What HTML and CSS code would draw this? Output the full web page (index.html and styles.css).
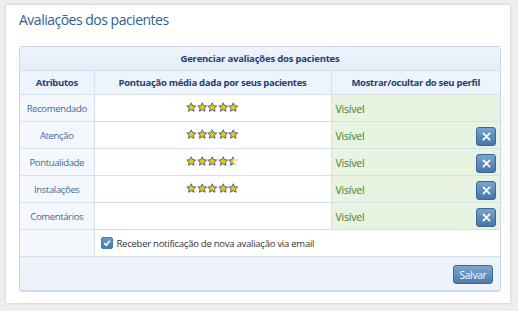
FILE: index.html
```html
<!DOCTYPE html>
<html>
<head>
<meta charset="utf-8">
<link rel="stylesheet" href="styles.css">
</head>
<body>
<svg class="defs" width="0" height="0">
  <defs>
    <polygon id="star" points="5,0 6.41,3.06 9.76,3.45 7.28,5.74 7.94,9.05 5,7.4 2.06,9.05 2.72,5.74 0.24,3.45 3.59,3.06"/>
    <clipPath id="half"><rect x="-1" y="-1" width="6.3" height="12"/></clipPath>
  </defs>
</svg>
<div class="card">
  <h1 class="title">Avaliações dos pacientes</h1>
  <div class="panel">
    <table class="grid">
      <colgroup><col class="c1"><col class="c2"><col class="c3"></colgroup>
      <thead>
        <tr><th colspan="3" class="caption">Gerenciar avaliações dos pacientes</th></tr>
        <tr class="heads"><th>Atributos</th><th>Pontuação média dada por seus pacientes</th><th>Mostrar/ocultar do seu perfil</th></tr>
      </thead>
      <tbody>
        <tr>
          <td class="attr">Recomendado</td>
          <td class="score"><span class="stars">
            <svg viewBox="-0.6 -0.6 11.2 11.2" class="st"><use href="#star"/></svg><svg viewBox="-0.6 -0.6 11.2 11.2" class="st"><use href="#star"/></svg><svg viewBox="-0.6 -0.6 11.2 11.2" class="st"><use href="#star"/></svg><svg viewBox="-0.6 -0.6 11.2 11.2" class="st"><use href="#star"/></svg><svg viewBox="-0.6 -0.6 11.2 11.2" class="st"><use href="#star"/></svg>
          </span></td>
          <td class="vis"><div class="visrow"><span>Visível</span></div></td>
        </tr>
        <tr>
          <td class="attr">Atenção</td>
          <td class="score"><span class="stars">
            <svg viewBox="-0.6 -0.6 11.2 11.2" class="st"><use href="#star"/></svg><svg viewBox="-0.6 -0.6 11.2 11.2" class="st"><use href="#star"/></svg><svg viewBox="-0.6 -0.6 11.2 11.2" class="st"><use href="#star"/></svg><svg viewBox="-0.6 -0.6 11.2 11.2" class="st"><use href="#star"/></svg><svg viewBox="-0.6 -0.6 11.2 11.2" class="st"><use href="#star"/></svg>
          </span></td>
          <td class="vis"><div class="visrow"><span>Visível</span><span class="xbtn"><svg viewBox="0 0 10 10"><path d="M2.2 2.2L7.8 7.8M7.8 2.2L2.2 7.8"/></svg></span></div></td>
        </tr>
        <tr>
          <td class="attr">Pontualidade</td>
          <td class="score"><span class="stars">
            <svg viewBox="-0.6 -0.6 11.2 11.2" class="st"><use href="#star"/></svg><svg viewBox="-0.6 -0.6 11.2 11.2" class="st"><use href="#star"/></svg><svg viewBox="-0.6 -0.6 11.2 11.2" class="st"><use href="#star"/></svg><svg viewBox="-0.6 -0.6 11.2 11.2" class="st"><use href="#star"/></svg><svg viewBox="-0.6 -0.6 11.2 11.2" class="st"><use href="#star" class="faded"/><use href="#star" clip-path="url(#half)"/></svg>
          </span></td>
          <td class="vis"><div class="visrow"><span>Visível</span><span class="xbtn"><svg viewBox="0 0 10 10"><path d="M2.2 2.2L7.8 7.8M7.8 2.2L2.2 7.8"/></svg></span></div></td>
        </tr>
        <tr>
          <td class="attr">Instalações</td>
          <td class="score"><span class="stars">
            <svg viewBox="-0.6 -0.6 11.2 11.2" class="st"><use href="#star"/></svg><svg viewBox="-0.6 -0.6 11.2 11.2" class="st"><use href="#star"/></svg><svg viewBox="-0.6 -0.6 11.2 11.2" class="st"><use href="#star"/></svg><svg viewBox="-0.6 -0.6 11.2 11.2" class="st"><use href="#star"/></svg><svg viewBox="-0.6 -0.6 11.2 11.2" class="st"><use href="#star"/></svg>
          </span></td>
          <td class="vis"><div class="visrow"><span>Visível</span><span class="xbtn"><svg viewBox="0 0 10 10"><path d="M2.2 2.2L7.8 7.8M7.8 2.2L2.2 7.8"/></svg></span></div></td>
        </tr>
        <tr>
          <td class="attr">Comentários</td>
          <td class="score"></td>
          <td class="vis"><div class="visrow"><span>Visível</span><span class="xbtn"><svg viewBox="0 0 10 10"><path d="M2.2 2.2L7.8 7.8M7.8 2.2L2.2 7.8"/></svg></span></div></td>
        </tr>
        <tr class="notify">
          <td class="attr"></td>
          <td colspan="2" class="notecell"><label class="check"><span class="box"><svg viewBox="0 0 10 10"><path d="M2.2 5.2L4.2 7.2L7.9 2.9"/></svg></span>Receber notificação de nova avaliação via email</label></td>
        </tr>
      </tbody>
    </table>
    <div class="footer"><span class="save">Salvar</span></div>
  </div>
</div>
</body>
</html>
```
FILE: styles.css
```css
html, body { margin: 0; padding: 0; }
body {
  background: #eeeeee;
  width: 518px;
  height: 311px;
  font-family: "Open Sans", "Noto Sans", sans-serif;
  padding: 5px 0 0 6px;
  box-sizing: border-box;
  overflow: hidden;
}
.defs { position: absolute; width: 0; height: 0; }
.card {
  width: 504px;
  height: 298px;
  background: #ffffff;
  box-shadow: 0 0 3px rgba(0,0,0,0.18);
  padding: 0 11px 0 13px;
  box-sizing: border-box;
}
.title {
  margin: 0;
  font-weight: normal;
  font-size: 14px;
  letter-spacing: -0.5px;
  color: #2f5f93;
  padding-top: 3px;
  height: 38px;
  line-height: 23px;
}
.panel {
  width: 480px;
  border: 1px solid #c8d7ea;
  border-radius: 3px;
  background: #eef3fa;
  box-shadow: 0 1px 0 #d3deea;
  overflow: hidden;
}
.grid {
  width: 480px;
  border-collapse: collapse;
  table-layout: fixed;
  font-size: 9.5px;
  letter-spacing: -0.3px;
}
.c1 { width: 74px; }
.c2 { width: 237px; }
.c3 { width: 169px; }
.grid th, .grid td { border: 1px solid #d3e0ee; padding: 0; }
.grid tr > :first-child { border-left: none; }
.grid tr > :last-child { border-right: none; }
.grid thead tr:first-child th { border-top: none; }
.caption {
  height: 23px;
  background: linear-gradient(#eef4fb, #e3ecf7);
  color: #1e3f74;
  font-weight: bold;
  font-size: 9.5px;
  letter-spacing: -0.2px;
}
.heads th {
  height: 23px;
  background: #eef4fb;
  color: #1e3f74;
  font-weight: bold;
  font-size: 9.5px;
  letter-spacing: -0.3px;
}
.grid tbody td { height: 26px; }
.attr {
  background: #f4f8fc;
  color: #3b6b9b;
  text-align: center;
  letter-spacing: -0.35px;
}
.score { background: #ffffff; text-align: center; }
.stars { display: inline-flex; vertical-align: middle; margin-top: -2px; }
.st { width: 10.5px; height: 11px; display: block; }
.st use { fill: #f7c600; stroke: #45668a; stroke-width: 1.05; stroke-linejoin: round; }
.st use.faded { fill: #eef2f7; stroke: #c8d5e2; }
.vis { background: #e6f4e1; color: #3f7d2c; font-size: 10.5px; letter-spacing: -0.2px; }
.visrow {
  display: flex;
  align-items: center;
  justify-content: space-between;
  padding: 2px 4px 0 4px;
}
.xbtn {
  width: 18px;
  height: 17px;
  border: 1px solid #3b6894;
  border-radius: 3px;
  background: linear-gradient(#78a3cf, #4676a8);
  display: flex;
  align-items: center;
  justify-content: center;
}
.xbtn svg { width: 11px; height: 11px; }
.xbtn path { stroke: #ffffff; stroke-width: 1.7; fill: none; stroke-linecap: round; }
.notify td { background: #ffffff; }
.notify td.attr { background: #f4f8fc; }
.notecell { padding-left: 6px !important; }
.check {
  display: flex;
  align-items: center;
  font-size: 9.5px;
  letter-spacing: -0.25px;
  color: #333333;
  gap: 4px;
}
.box {
  width: 10px;
  height: 10px;
  border: 1px solid #4b7aa8;
  border-radius: 2px;
  background: linear-gradient(#6b9bcc, #4477ab);
  display: flex;
}
.box svg { width: 10px; height: 10px; }
.box path { stroke: #ffffff; stroke-width: 1.7; fill: none; }
.footer {
  height: 33px;
  display: flex;
  justify-content: flex-end;
  align-items: center;
  padding-right: 7px;
  background: #eef3fa;
}
.save {
  width: 38px;
  height: 17px;
  border: 1px solid #3b6894;
  border-radius: 3px;
  background: linear-gradient(#7ea7d0, #4a79aa);
  color: #ffffff;
  font-size: 10px;
  letter-spacing: -0.2px;
  display: flex;
  align-items: center;
  justify-content: center;
  margin-top: 2px;
}
```
